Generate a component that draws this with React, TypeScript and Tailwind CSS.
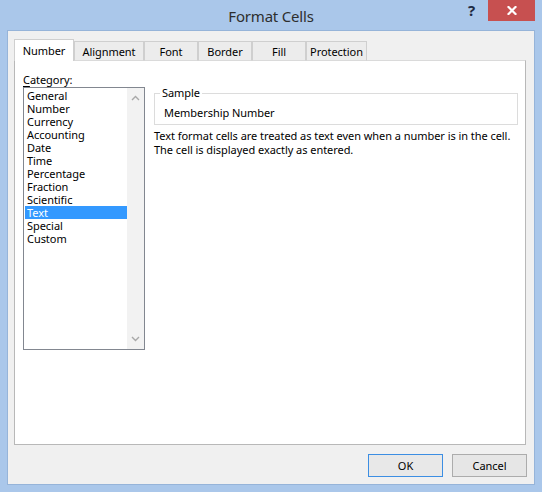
import React from "react";

const categories = [
  "General",
  "Number",
  "Currency",
  "Accounting",
  "Date",
  "Time",
  "Percentage",
  "Fraction",
  "Scientific",
  "Text",
  "Special",
  "Custom",
];

const tabs: { label: string; w: string }[] = [
  { label: "Alignment", w: "w-[70px]" },
  { label: "Font", w: "w-[54px]" },
  { label: "Border", w: "w-[54px]" },
  { label: "Fill", w: "w-[54px]" },
  { label: "Protection", w: "w-[61px]" },
];

export default function App() {
  return (
    <div className="w-[542px] h-[492px] bg-[#aac7ea] flex flex-col font-['Noto_Sans','Open_Sans',sans-serif] text-[11px] tracking-[-0.05px] text-black leading-none overflow-hidden">
      {/* Title bar */}
      <div className="relative h-[30px] flex items-center justify-center">
        <span className="text-[15px] text-[#2e2e2e] mt-[2px] tracking-[-0.2px]">Format Cells</span>
        <span className="absolute left-[468px] top-[3px] text-[15px] font-bold text-[#1d2a44]">?</span>
        <div className="absolute left-[488px] top-0 w-[47px] h-[21px] bg-[#c75050] flex items-center justify-center">
          <svg width="10" height="9" viewBox="0 0 10 9">
            <path d="M1.5 1 L8.5 8 M8.5 1 L1.5 8" stroke="white" strokeWidth="2.2" strokeLinecap="square" />
          </svg>
        </div>
      </div>

      {/* Client area */}
      <div className="mx-[7px] h-[455px] border border-[#96b4d9] bg-[#f0f0f0] pl-[6px] pr-[7px] pt-[8px] flex flex-col">
        {/* Tabs */}
        <div className="relative z-10 -mb-px flex items-end h-[22px]">
          <div className="w-[60px] h-[22px] bg-white border-l border-t border-r border-[#cfcfcf] flex items-center justify-center pb-[1px]">
            Number
          </div>
          {tabs.map((t) => (
            <div
              key={t.label}
              className={`${t.w} h-[20px] bg-[#ececec] border border-[#cfcfcf] border-b-[#dadada] flex items-center justify-center`}
            >
              {t.label}
            </div>
          ))}
        </div>

        {/* Panel */}
        <div className="mr-[1px] h-[385px] bg-white border border-[#b8b8b8] border-t-[#dadada] flex pl-[8px] pt-[12px]">
          {/* Category column */}
          <div className="w-[122px] flex flex-col">
            <div className="h-[14px] leading-[14px]">
              <span className="underline underline-offset-[2px]">C</span>ategory:
            </div>
            <div className="h-[263px] border border-[#828790] flex">
              <div className="flex-1 pt-[1px] pl-[1px]">
                {categories.map((c) => (
                  <div
                    key={c}
                    className={`h-[13px] leading-[13px] pl-[2px] ${
                      c === "Text" ? "bg-[#3399ff] text-white" : ""
                    }`}
                  >
                    {c}
                  </div>
                ))}
              </div>
              <div className="w-[17px] bg-[#f2f2f2] flex flex-col items-center justify-between py-[7px]">
                <svg width="9" height="6" viewBox="0 0 9 6">
                  <path d="M1 5 L4.5 1.5 L8 5" fill="none" stroke="#a8a8a8" strokeWidth="1.4" />
                </svg>
                <svg width="9" height="6" viewBox="0 0 9 6">
                  <path d="M1 1 L4.5 4.5 L8 1" fill="none" stroke="#a8a8a8" strokeWidth="1.4" />
                </svg>
              </div>
            </div>
          </div>

          {/* Right column */}
          <div className="ml-[9px] mt-[13px] w-[364px] flex flex-col">
            <fieldset className="border border-[#dcdcdc] h-[39px] px-[8px]">
              <legend className="ml-[-3px] px-[2px] leading-[14px]">Sample</legend>
              <div className="leading-[14px] mt-[6px] ml-[1px]">Membership Number</div>
            </fieldset>
            <div className="mt-[4px] leading-[14px]">
              <div>Text format cells are treated as text even when a number is in the cell.</div>
              <div>The cell is displayed exactly as entered.</div>
            </div>
          </div>
        </div>

        {/* Buttons */}
        <div className="mt-[9px] flex justify-end gap-[9px]">
          <button className="w-[75px] h-[23px] border border-[#3c8ee3] bg-[#e8e8e8] flex items-center justify-center">
            OK
          </button>
          <button className="w-[75px] h-[23px] border border-[#acacac] bg-[#e6e6e6] flex items-center justify-center">
            Cancel
          </button>
        </div>
      </div>
    </div>
  );
}
